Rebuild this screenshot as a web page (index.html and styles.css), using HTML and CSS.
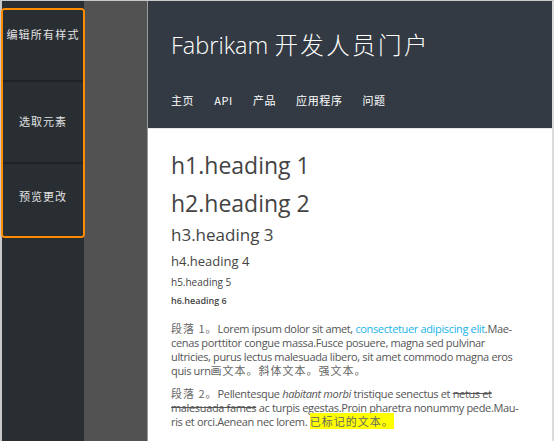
FILE: index.html
```html
<!DOCTYPE html>
<html lang="zh">
<head>
<meta charset="utf-8">
<link rel="stylesheet" href="styles.css">
</head>
<body>
<div class="frame">
  <aside class="tools">
    <div class="tool-box">
      <div class="tool tool-edit">编辑所有样式</div>
      <div class="tool tool-pick">选取元素</div>
      <div class="tool tool-preview">预览更改</div>
    </div>
  </aside>
  <div class="gutter"></div>
  <main class="page">
    <header class="site-header">
      <h1 class="site-title">Fabrikam <span class="title-cjk">开发人员门户</span></h1>
      <nav class="site-nav">
        <a>主页</a>
        <a>API</a>
        <a>产品</a>
        <a>应用程序</a>
        <a>问题</a>
      </nav>
    </header>
    <section class="content">
      <h1>h1.heading 1</h1>
      <h2>h2.heading 2</h2>
      <h3>h3.heading 3</h3>
      <h4>h4.heading 4</h4>
      <h5>h5.heading 5</h5>
      <h6>h6.heading 6</h6>
      <p><span class="cjk">段落 1。</span>Lorem ipsum dolor sit amet, <a class="link">consectetuer adipiscing elit</a>.Mae&shy;cenas porttitor congue massa.Fusce posuere, magna sed pulvinar ultricies, purus lectus malesuada libero, sit amet commodo magna eros quis urn<span class="cjk">画文本。斜体文本。强文本。</span></p>
      <p><span class="cjk">段落 2。</span>Pellentesque <em>habitant morbi</em> tristique senectus et <s>netus et malesuada fames</s> ac turpis egestas.Proin pharetra nonummy pede.Mau&shy;ris et orci.Aenean nec lorem. <mark class="cjk">已标记的文本。</mark></p>
    </section>
  </main>
</div>
</body>
</html>
```
FILE: styles.css
```css
html, body {
  margin: 0;
  padding: 0;
  height: 100%;
}
body {
  background: #c9c9c9;
  font-family: "Open Sans", "Noto Sans CJK SC", sans-serif;
  overflow: hidden;
}
.frame {
  display: flex;
  height: 440px;
  margin: 1px 0 0 2px;
}
.tools {
  width: 82px;
  flex: none;
  background: #292e33;
  position: relative;
}
.tool-box {
  position: absolute;
  left: -1px;
  top: 7px;
  width: 80px;
  height: 226px;
  border: 2px solid #ff8c00;
  border-radius: 4px;
  display: flex;
  flex-direction: column;
  overflow: hidden;
}
.tool {
  color: #e2e2e2;
  font-family: "Noto Sans CJK SC", sans-serif;
  font-size: 11px;
  letter-spacing: 1px;
  text-align: center;
  white-space: nowrap;
  background: #292e33;
}
.tool-edit {
  height: 70px;
  padding-top: 16px;
  box-sizing: border-box;
  letter-spacing: 1.2px;
  margin-left: -4px;
  margin-right: -4px;
}
.tool-pick {
  height: 80px;
  line-height: 78px;
  border-top: 2px solid #1f2327;
}
.tool-preview {
  flex: 1;
  line-height: 64px;
  border-top: 2px solid #1f2327;
}
.gutter {
  width: 63px;
  flex: none;
  background: #525252;
  border-right: 1px solid #9a9a9a;
}
.page {
  flex: 1;
  display: flex;
  flex-direction: column;
  background: #ffffff;
  border-right: 2px solid #dcdcdc;
}
.site-header {
  background: #333a43;
  height: 127px;
  padding: 0 0 0 23px;
  box-sizing: border-box;
  color: #ffffff;
}
.site-title {
  margin: 0;
  padding-top: 27px;
  font-family: "Open Sans", "Noto Sans CJK SC", sans-serif;
  font-weight: 300;
  font-size: 23.5px;
  line-height: 32px;
  letter-spacing: 0;
}
.title-cjk {
  font-family: "Noto Sans CJK SC", sans-serif;
  font-weight: 300;
  letter-spacing: 2.4px;
}
.site-nav {
  display: flex;
  gap: 20px;
  margin-top: 31px;
  font-family: "Noto Sans CJK SC", sans-serif;
  font-size: 11px;
  line-height: 16px;
  letter-spacing: 0.6px;
}
.site-nav a {
  color: #ffffff;
}
.content {
  padding: 22px 30px 0 23px;
  color: #555555;
  border-top: 1px solid #e6e6e6;
}
.content h1, .content h2, .content h3, .content h4, .content h5, .content h6 {
  margin: 0;
  font-weight: 400;
  color: #444444;
  font-family: "Open Sans", sans-serif;
}
.content h1 { font-size: 23px; line-height: 28px; }
.content h2 { font-size: 23px; line-height: 36px; margin-top: 6px; }
.content h3 { font-size: 17px; line-height: 30px; margin-top: -1px; }
.content h4 { font-size: 13px; line-height: 22px; margin-top: 0; }
.content h5 { font-size: 10px; line-height: 20px; }
.content h6 { font-size: 9px; line-height: 18px; font-weight: 600; }
.content p {
  margin: 12px 0 0;
  font-size: 11px;
  line-height: 14px;
  letter-spacing: -0.35px;
  hyphens: manual;
}
.content p + p {
  margin-top: 9px;
}
.cjk {
  font-family: "Noto Sans CJK SC", sans-serif;
  color: #666666;
  letter-spacing: 1px;
  line-height: 1;
}
.link {
  color: #1ab3e8;
}
mark {
  background: #ffff00;
  color: #555555;
}
```
